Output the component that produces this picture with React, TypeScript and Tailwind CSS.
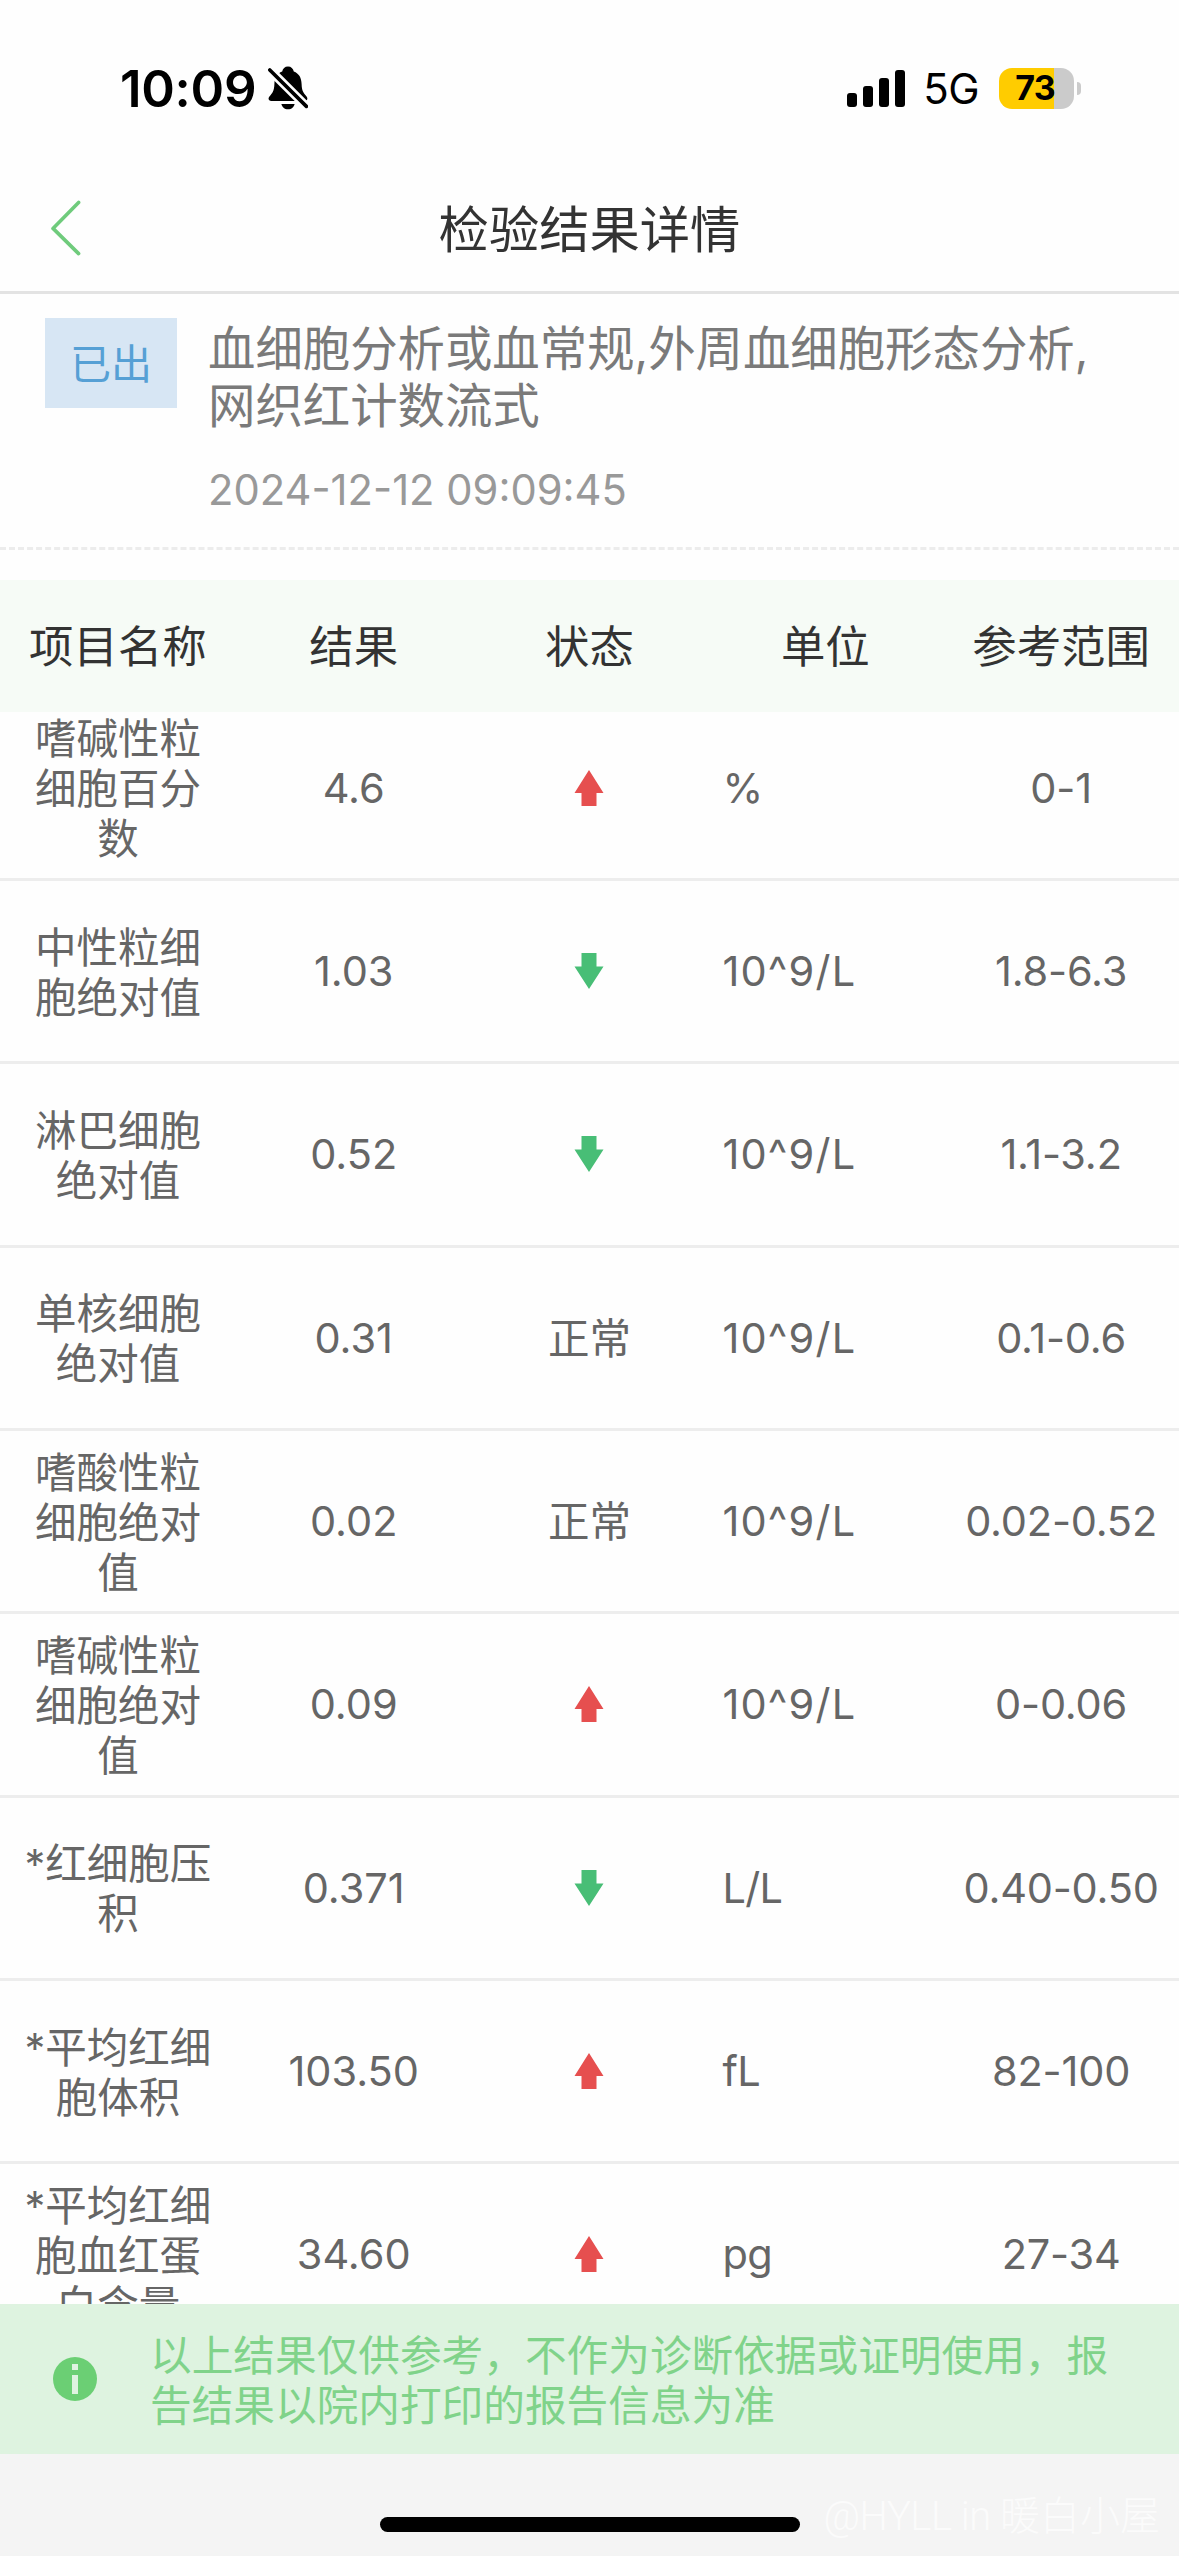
import React from "react";
import clsx from "clsx";

type Status = "up" | "down" | "normal";

const columns = ["项目名称", "结果", "状态", "单位", "参考范围"];

const rows: { name: string; result: string; status: Status; unit: string; range: string }[] = [
  { name: "嗜碱性粒细胞百分数", result: "4.6", status: "up", unit: "%", range: "0-1" },
  { name: "中性粒细胞绝对值", result: "1.03", status: "down", unit: "10^9/L", range: "1.8-6.3" },
  { name: "淋巴细胞绝对值", result: "0.52", status: "down", unit: "10^9/L", range: "1.1-3.2" },
  { name: "单核细胞绝对值", result: "0.31", status: "normal", unit: "10^9/L", range: "0.1-0.6" },
  { name: "嗜酸性粒细胞绝对值", result: "0.02", status: "normal", unit: "10^9/L", range: "0.02-0.52" },
  { name: "嗜碱性粒细胞绝对值", result: "0.09", status: "up", unit: "10^9/L", range: "0-0.06" },
  { name: "*红细胞压积", result: "0.371", status: "down", unit: "L/L", range: "0.40-0.50" },
  { name: "*平均红细胞体积", result: "103.50", status: "up", unit: "fL", range: "82-100" },
  { name: "*平均红细胞血红蛋白含量", result: "34.60", status: "up", unit: "pg", range: "27-34" },
];

function StatusMark({ status }: { status: Status }) {
  if (status === "normal") return <span className="pt-0.5">正常</span>;
  if (status === "up") {
    return (
      <svg width="30" height="36" viewBox="0 0 30 36" fill="#e64f4f">
        <path d="M15 0 29.5 23H22.5V36H7.5V23H.5Z" />
      </svg>
    );
  }
  return (
    <svg width="30" height="36" viewBox="0 0 30 36" fill="#48be76">
      <path d="M15 36 29.5 13.5H22.5V0H7.5V13.5H.5Z" />
    </svg>
  );
}

function StatusBar() {
  return (
    <div className="flex h-[176px] shrink-0 items-center pl-[120px] pr-[98px] text-black">
      <span className="text-[51px] font-semibold leading-none tracking-[-0.3px]">10:09</span>
      <svg className="ml-3" width="40" height="44" viewBox="0 0 40 44">
        <path
          d="M20 0.5C16.8 0.5 14.8 2.6 14.2 5.4C9 7.4 6.6 11.5 6.4 18C6.2 25 4.2 27.4 1.6 30.2C-0.4 32.4 0.6 35 3.4 35H36.6C39.4 35 40.2 32.4 38.4 30.2C35.6 27.2 33.8 25 33.6 18C33.4 11.5 31 7.4 25.8 5.4C25.2 2.6 23.2 0.5 20 0.5Z"
          fill="#000"
        />
        <path d="M13.4 38H26.6C26 41 23.6 43.3 20 43.3C16.4 43.3 14 41 13.4 38Z" fill="#000" />
        <path d="M1.8 4 38.4 40.4" stroke="#fefefe" strokeWidth="9" />
        <path d="M1.8 4 38.4 40.4" stroke="#000" strokeWidth="3.6" strokeLinecap="round" />
      </svg>
      <div className="ml-auto flex items-center">
        <div className="flex h-[37px] items-end gap-1.5">
          <span className="h-3.5 w-2.5 rounded-[3px] bg-black" />
          <span className="h-[21px] w-2.5 rounded-[3px] bg-black" />
          <span className="h-[29px] w-2.5 rounded-[3px] bg-black" />
          <span className="h-[37px] w-2.5 rounded-[3px] bg-black" />
        </div>
        <span className="ml-[18px] pt-0.5 text-[42px] leading-none tracking-[-0.5px]">5G</span>
        <div className="ml-5 flex h-[41px] w-[75px] items-center justify-center rounded-[13px] bg-[linear-gradient(to_right,#ffcc00_55px,#cbcbcb_55px)] pr-[3px]">
          <span className="text-[34px] font-bold leading-none tracking-[-0.8px]">73</span>
        </div>
        <span className="ml-[3px] h-[13px] w-1 rounded-r-full bg-[#cbcbcb]" />
      </div>
    </div>
  );
}

export default function App() {
  return (
    <div className="flex h-[2556px] w-[1179px] flex-col overflow-hidden bg-[#fefefe] font-['Inter','Noto_Sans_CJK_SC',sans-serif]">
      <StatusBar />

      {/* Nav bar */}
      <header className="grid h-[118px] shrink-0 grid-cols-[1fr_auto_1fr] items-center border-b-[3px] border-[#e3e3e3] px-[49px] pb-[11px]">
        <svg width="32" height="56" viewBox="0 0 32 56" fill="none" stroke="#6fcb7c" strokeWidth="3.6" strokeLinecap="round" strokeLinejoin="round">
          <path d="M29.6 2.4 4 28.4 29.6 53.6" />
        </svg>
        <h1 className="pt-[5px] text-[50.3px] leading-none text-[#333]">检验结果详情</h1>
      </header>

      {/* Report summary */}
      <section className="flex h-[256px] shrink-0 items-start border-b-[3px] border-dashed border-[#ececec] pl-[45px] pt-6">
        <span className="flex h-[90px] w-[132px] items-center justify-center bg-[#d7e6f4] pt-[3px] text-[41px] leading-none text-[#56a0d5]">
          已出
        </span>
        <div className="ml-[31px] w-[900px]">
          <p className="pt-[2px] text-[47.4px] leading-[57px] text-[#7a7a7a]">
            血细胞分析或血常规,外周血细胞形态分析,网织红计数流式
          </p>
          <p className="mt-[30px] text-[41.7px] leading-[52px] text-[#999]">2024-12-12 09:09:45</p>
        </div>
      </section>

      {/* Table head */}
      <div className="mt-[30px] grid h-[132px] shrink-0 grid-cols-5 items-center bg-[#f6fbf6] pt-[3px] text-center text-[44.4px] leading-none text-[#333]">
        {columns.map((c) => (
          <span key={c}>{c}</span>
        ))}
      </div>

      <main className="min-h-0 flex-1 overflow-hidden">
        <div className="-mt-[14.4px]">
          {rows.map((r) => (
            <div
              key={r.name}
              className="grid h-[183.33px] grid-cols-5 items-center border-b-[3px] border-[#ededed] text-center text-[41.5px] leading-[50px] text-[#666]"
            >
              <span className="px-[15px] pt-[3px]">{r.name}</span>
              <span>{r.result}</span>
              <span className="flex justify-center">
                <StatusMark status={r.status} />
              </span>
              <span className={clsx("pl-[15px] text-left", r.unit.includes("^") ? "tracking-[1.2px]" : "tracking-[-0.6px]")}>
                {r.unit}
              </span>
              <span className="tracking-[-0.2px]">{r.range}</span>
            </div>
          ))}
        </div>
      </main>

      {/* Notice */}
      <div className="flex h-[150px] shrink-0 items-center bg-[#def3e0] pl-[53px]">
        <svg width="44" height="44" viewBox="0 0 44 44">
          <circle cx="22" cy="22" r="22" fill="#6bcf74" />
          <path d="M19 7h6v6h-6zM19 18h6v19h-6z" fill="#def3e0" />
        </svg>
        <p className="ml-[53px] w-[970px] pt-[3px] text-[41.67px] leading-[50px] text-[#80d38a]">
          以上结果仅供参考，不作为诊断依据或证明使用，报告结果以院内打印的报告信息为准
        </p>
      </div>

      <footer className="relative flex h-[102px] shrink-0 justify-center bg-[#f4f4f4]">
        <span className="mt-[63px] h-[15px] w-[420px] rounded-full bg-black" />
        <span className="absolute right-[19px] top-[38px] whitespace-nowrap font-['Roboto','Noto_Sans_CJK_SC',sans-serif] text-[40px] font-light leading-[50px] text-[#fbfbfb]">
          <span className="tracking-[-0.5px]">@HYLL in </span>暖白小屋
        </span>
      </footer>
    </div>
  );
}
